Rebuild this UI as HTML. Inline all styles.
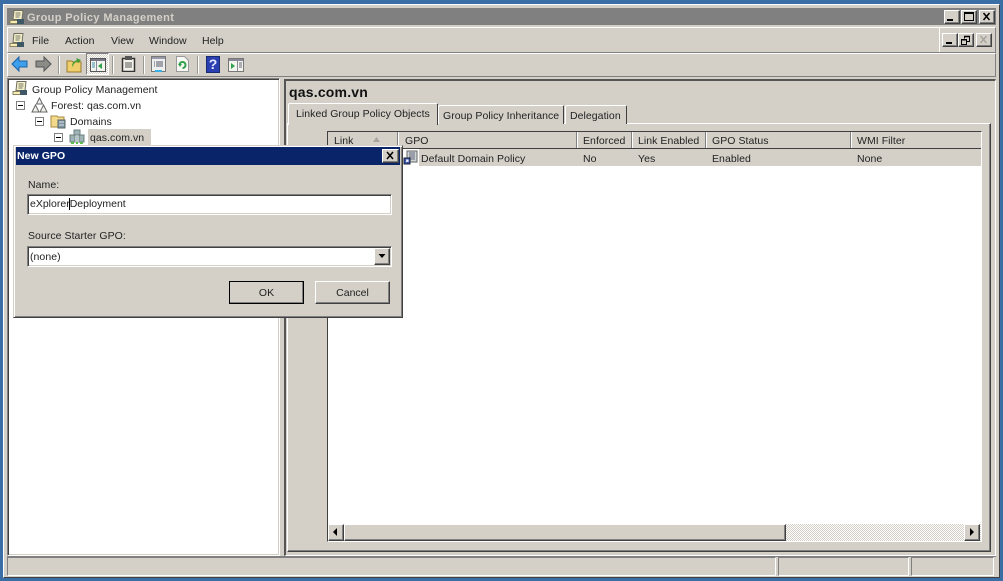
<!DOCTYPE html>
<html><head><meta charset="utf-8">
<style>
html,body{margin:0;padding:0}
body{width:1003px;height:581px;overflow:hidden;background:#3a6ea5;position:relative;font:10.5px/13px "Liberation Sans",sans-serif;color:#222}
div,span,svg{position:absolute;box-sizing:border-box}
.t{white-space:nowrap;letter-spacing:.05px}
.sunk{background:#fff;border:1px solid;border-color:#808080 #fff #fff #808080;box-shadow:inset 1px 1px 0 #404040,inset -1px -1px 0 #d4d0c8}
.rais{background:#d4d0c8;border:1px solid;border-color:#fff #404040 #404040 #fff;box-shadow:inset -1px -1px 0 #808080}
.hd{top:132px;height:17px;background:#d4d0c8;border-right:1px solid #808080;border-left:1px solid #fff}
.hdt{top:135px}
.rowt{top:153px}
.sep{top:56px;width:1px;height:18px;background:#9a9a94;box-shadow:1px 0 0 #fff}
.tab{background:#d4d0c8;border:1px solid #fff;border-bottom:0;border-right:1px solid #404040;border-radius:2px 2px 0 0}
.btn{text-align:center}
</style></head><body>

<!-- window -->
<div style="left:3px;top:4px;width:997px;height:574px;background:#d4d0c8;border:1px solid #fff;border-right-color:#404040;border-bottom-color:#404040"></div>
<div style="left:7px;top:8px;width:989px;height:17px;background:#808080"></div>
<svg style="left:9px;top:10px" width="17" height="15" viewBox="0 0 17 15"><path d="M5 .5h9l-1 9H4z" fill="#f6f0c8" stroke="#6e6e60"/><path d="M6.500 3h5M6.500 5h5M6.500 7h4" stroke="#77776a"/><path d="M1 10.500h8v3H1z" fill="#f6ecb4" stroke="#8a8560"/><path d="M8 9h7v5H8z" fill="#3f5866"/></svg>
<div class="t" style="left:27px;top:12px;font-weight:bold;font-size:11px;color:#d4d0c8;letter-spacing:.37px">Group Policy Management</div>
<div class="rais" style="left:944px;top:10px;width:16px;height:14px"></div>
<div style="left:947px;top:19px;width:6px;height:2px;background:#000"></div>
<div class="rais" style="left:961px;top:10px;width:16px;height:14px"></div>
<div style="left:964px;top:12px;width:10px;height:9px;border:1px solid #000;border-top-width:2px"></div>
<div class="rais" style="left:979px;top:10px;width:16px;height:14px"></div>
<svg style="left:979px;top:10px" width="16" height="14"><path d="M4.500 3l6 7M10.500 3l-6 7" stroke="#000" stroke-width="1.500"/></svg>

<!-- menu -->
<div style="left:7px;top:27px;width:989px;height:26px;border:1px solid;border-color:#fff #808080 #808080 #fff"></div>
<div style="left:939px;top:28px;width:1px;height:24px;background:#fff"></div>
<svg style="left:9px;top:33px" width="17" height="15" viewBox="0 0 17 15"><path d="M5 .5h9l-1 9H4z" fill="#f6f0c8" stroke="#6e6e60"/><path d="M6.500 3h5M6.500 5h5M6.500 7h4" stroke="#77776a"/><path d="M1 10.500h8v3H1z" fill="#f6ecb4" stroke="#8a8560"/><path d="M8 9h7v5H8z" fill="#3f5866"/></svg>
<div class="t" style="left:32px;top:35px">File</div>
<div class="t" style="left:65px;top:35px">Action</div>
<div class="t" style="left:111px;top:35px">View</div>
<div class="t" style="left:149px;top:35px">Window</div>
<div class="t" style="left:202px;top:35px">Help</div>
<div class="rais" style="left:942px;top:33px;width:16px;height:14px"></div>
<div style="left:946px;top:42px;width:6px;height:2px;background:#000"></div>
<div class="rais" style="left:958px;top:33px;width:16px;height:14px"></div>
<svg style="left:958px;top:33px" width="16" height="14"><path d="M6.500 3.500h5v5h-3M6.500 3.500v2" fill="none" stroke="#000"/><path d="M6 3.500h6" stroke="#000" stroke-width="1.500"/><rect x="3.500" y="6.500" width="5" height="5" fill="none" stroke="#000"/><path d="M3 7h6" stroke="#000"/></svg>
<div class="rais" style="left:976px;top:33px;width:16px;height:14px"></div>
<svg style="left:976px;top:33px" width="16" height="14"><path d="M4.500 3l6 7M10.500 3l-6 7" stroke="#a8a59e" stroke-width="1.500"/></svg>

<!-- toolbar -->
<div style="left:7px;top:53px;width:989px;height:24px;border:1px solid;border-color:#fff #808080 #808080 #fff"></div>
<svg style="left:11px;top:55px" width="18" height="18" viewBox="0 0 18 18"><path d="M1 9l7-7v4h8v6H8v4z" fill="#3ea0ea" stroke="#1c5fa8"/></svg>
<svg style="left:34px;top:55px" width="18" height="18" viewBox="0 0 18 18"><path d="M17 9l-7-7v4H2v6h8v4z" fill="#8c8c86" stroke="#555"/></svg>
<div class="sep" style="left:58px"></div>
<svg style="left:66px;top:56px" width="17" height="17" viewBox="0 0 17 17"><path d="M1 5h5l1 1h8v10H1z" fill="#f0ce6c" stroke="#9a7a30"/><path d="M6 11c0-4 2-6 5-7l-1-2 5 2-3 3-1-2c-2 1-3 3-5 6z" fill="#3f9e2f"/></svg>
<div style="left:86px;top:53px;width:23px;height:22px;background:repeating-conic-gradient(#fff 0 25%,#d4d0c8 0 50%) 0 0/2px 2px;border:1px solid;border-color:#808080 #fff #fff #808080"></div>
<svg style="left:90px;top:58px" width="16" height="14" viewBox="0 0 16 14"><path d="M.5.500h15v13H.5z" fill="#f4f4ee" stroke="#555"/><path d="M1 1h14v2H1z" fill="#778"/><path d="M6.500 3v10" stroke="#889"/><path d="M2 5h3M2 7h3M2 9h3" stroke="#3a8fb0"/><path d="M12 5v6L8 8z" fill="#2fa04a"/></svg>
<div class="sep" style="left:112px"></div>
<svg style="left:121px;top:55px" width="15" height="17" viewBox="0 0 15 17"><path d="M1.500 3.500h12v13h-12z" fill="#f4f2ea" stroke="#333" stroke-width="1.500"/><path d="M4 1h7v4H4z" fill="#555"/><path d="M4 8h7M4 10h7M4 12h7" stroke="#555"/></svg>
<div class="sep" style="left:143px"></div>
<svg style="left:151px;top:56px" width="15" height="16" viewBox="0 0 15 16"><path d="M.5.500h14v15H.5z" fill="#eef0f0" stroke="#777"/><path d="M1 1h13v2H1z" fill="#99a"/><path d="M3 6h1M5 6h7M3 8h1M5 8h7M3 10h1M5 10h7" stroke="#556"/><path d="M4 14h7v2H4z" fill="#35b0e8"/></svg>
<svg style="left:176px;top:56px" width="13" height="16" viewBox="0 0 13 16"><path d="M.5.500h8l4 4v11H.5z" fill="#f8f8f4" stroke="#999"/><path d="M3.500 9a3 3 0 1 1 3 3" fill="none" stroke="#2fa04a" stroke-width="2"/><path d="M2 8h4l-2 3z" fill="#2fa04a"/></svg>
<div class="sep" style="left:197px"></div>
<div style="left:206px;top:56px;width:14px;height:17px;background:#2a3fb0;border:1px solid #1a2a70"></div>
<div style="left:206px;top:56px;width:14px;height:17px;text-align:center;color:#e8e8ff;font:bold 14px/17px 'Liberation Sans',sans-serif">?</div>
<svg style="left:228px;top:58px" width="16" height="14" viewBox="0 0 16 14"><path d="M.5.500h15v13H.5z" fill="#f4f4ee" stroke="#777"/><path d="M1 1h14v2H1z" fill="#889"/><path d="M9.500 3v10" stroke="#889"/><path d="M11 5h3M11 7h3M11 9h3" stroke="#667"/><path d="M3 5v6l4-3z" fill="#2fa04a"/></svg>

<!-- tree -->
<div class="sunk" style="left:7px;top:78px;width:273px;height:478px"></div>
<svg style="left:12px;top:81px" width="17" height="15" viewBox="0 0 17 15"><path d="M5 .5h9l-1 9H4z" fill="#f6f0c8" stroke="#6e6e60"/><path d="M6.500 3h5M6.500 5h5M6.500 7h4" stroke="#77776a"/><path d="M1 10.500h8v3H1z" fill="#f6ecb4" stroke="#8a8560"/><path d="M8 9h7v5H8z" fill="#3f5866"/></svg>
<div class="t" style="left:32px;top:84px">Group Policy Management</div>
<div style="left:16px;top:101px;width:9px;height:9px;border:1px solid #808080;background:#fff"></div><div style="left:18px;top:105px;width:5px;height:1px;background:#000"></div>
<svg style="left:31px;top:97px" width="17" height="16" viewBox="0 0 17 16"><path d="M8.500 1l3 6h-6zM4.500 8l3.500 7H1zM12.500 8l3.500 7H9z" fill="#f0f0ec" stroke="#666"/></svg>
<div class="t" style="left:51px;top:100px">Forest: qas.com.vn</div>
<div style="left:35px;top:117px;width:9px;height:9px;border:1px solid #808080;background:#fff"></div><div style="left:37px;top:121px;width:5px;height:1px;background:#000"></div>
<svg style="left:50px;top:113px" width="17" height="16" viewBox="0 0 17 16"><path d="M1 3h6l1 1h6v10H1z" fill="#f3d98c" stroke="#a98a40"/><path d="M8 7h7v8H8z" fill="#7e97a0" stroke="#566"/><path d="M9 9h5M9 12h5" stroke="#dde"/></svg>
<div class="t" style="left:70px;top:116px">Domains</div>
<div style="left:54px;top:133px;width:9px;height:9px;border:1px solid #808080;background:#fff"></div><div style="left:56px;top:137px;width:5px;height:1px;background:#000"></div>
<svg style="left:69px;top:129px" width="16" height="16" viewBox="0 0 16 16"><path d="M5 1h6v5H5zM1 6h5v7H1zM10 6h5v7h-5z" fill="#9fb2b5" stroke="#6c8080"/><path d="M6 7h4v7H6z" fill="#b8c6c8"/><path d="M2 13h3v2H2zM11 13h3v2h-3zM7 13h2v2H7z" fill="#5fc04a"/></svg>
<div style="left:88px;top:129px;width:63px;height:16px;background:#d4d0c8"></div>
<div class="t" style="left:90px;top:132px">qas.com.vn</div>

<!-- right pane -->
<div style="left:284px;top:79px;width:712px;height:477px;border-top:2px solid #555;border-left:2px solid #555;border-right:1px solid #fff;border-bottom:1px solid #fff"></div>
<div class="t" style="left:289px;top:84px;font-weight:bold;font-size:14px;line-height:16px;color:#111;letter-spacing:.2px">qas.com.vn</div>
<div style="left:287px;top:123px;width:704px;height:429px;background:#d4d0c8;border:1px solid;border-color:#fff #404040 #404040 #fff;box-shadow:inset -1px -1px 0 #808080"></div>
<div class="tab" style="left:438px;top:105px;width:126px;height:19px"></div>
<div class="t" style="left:443px;top:110px">Group Policy Inheritance</div>
<div class="tab" style="left:565px;top:105px;width:62px;height:19px"></div>
<div class="t" style="left:570px;top:110px">Delegation</div>
<div class="tab" style="left:288px;top:103px;width:150px;height:22px;z-index:1"></div>
<div class="t" style="left:296px;top:108px;z-index:2">Linked Group Policy Objects</div>

<!-- list -->
<div style="left:327px;top:131px;width:655px;height:411px;background:#fff;border:1px solid;border-color:#404040 #fff #fff #404040"></div>
<div style="left:328px;top:132px;width:653px;height:17px;background:#d4d0c8;border-bottom:1px solid #404040"></div>
<div class="hd" style="left:328px;width:70px;border-left:0"></div>
<div class="hd" style="left:398px;width:179px"></div>
<div class="hd" style="left:577px;width:55px"></div>
<div class="hd" style="left:632px;width:74px"></div>
<div class="hd" style="left:706px;width:145px"></div>
<div class="hd" style="left:851px;width:130px;border-right:0"></div>
<div style="left:328px;top:148px;width:653px;height:1px;background:#404040"></div>
<div class="t hdt" style="left:334px">Link</div>
<svg style="left:372px;top:137px" width="9" height="6"><path d="M4.500 0L8 5H1z" fill="#a8a59e"/></svg>
<div class="t hdt" style="left:405px">GPO</div>
<div class="t hdt" style="left:583px">Enforced</div>
<div class="t hdt" style="left:638px">Link Enabled</div>
<div class="t hdt" style="left:712px">GPO Status</div>
<div class="t hdt" style="left:857px">WMI Filter</div>
<div style="left:328px;top:149px;width:653px;height:17px;background:#d4d0c8"></div>
<div style="left:403px;top:149px;width:16px;height:17px;background:#fff"></div>
<svg style="left:403px;top:150px" width="15" height="15" viewBox="0 0 15 15"><path d="M4 1h10v11H4z" fill="#cfd6d8" stroke="#666"/><path d="M6 3h6M6 5h6M6 7h6M6 9h6" stroke="#667"/><path d="M1 8h6v6H1z" fill="#3450b0" stroke="#223"/><path d="M3 12l2-2M3 10h2v2" stroke="#fff" fill="none"/></svg>
<div class="t rowt" style="left:421px">Default Domain Policy</div>
<div class="t rowt" style="left:583px">No</div>
<div class="t rowt" style="left:638px">Yes</div>
<div class="t rowt" style="left:712px">Enabled</div>
<div class="t rowt" style="left:857px">None</div>

<!-- scrollbar -->
<div style="left:328px;top:524px;width:653px;height:17px;background:repeating-conic-gradient(#fff 0 25%,#d4d0c8 0 50%) 0 0/2px 2px"></div>
<div class="rais" style="left:328px;top:524px;width:16px;height:17px"></div>
<svg style="left:328px;top:524px" width="16" height="17"><path d="M9 4v8L5 8z" fill="#000"/></svg>
<div class="rais" style="left:344px;top:524px;width:442px;height:17px"></div>
<div class="rais" style="left:964px;top:524px;width:16px;height:17px"></div>
<svg style="left:964px;top:524px" width="16" height="17"><path d="M6 4v8l4-4z" fill="#000"/></svg>

<!-- status -->
<div style="left:7px;top:556px;width:989px;height:1px;background:#808080"></div>
<div style="left:7px;top:557px;width:769px;height:19px;border:1px solid;border-color:#808080 #fff #fff #808080"></div>
<div style="left:778px;top:557px;width:131px;height:19px;border:1px solid;border-color:#808080 #fff #fff #808080"></div>
<div style="left:911px;top:557px;width:83px;height:19px;border:1px solid;border-color:#808080 #fff #fff #808080"></div>

<!-- dialog -->
<div style="left:13px;top:145px;width:390px;height:173px;background:#d4d0c8;border:1px solid;border-color:#d4d0c8 #404040 #404040 #d4d0c8;box-shadow:inset 1px 1px 0 #fff,inset -1px -1px 0 #808080;z-index:10"></div>
<div style="left:16px;top:147px;width:384px;height:18px;background:#0a246a;z-index:11"></div>
<div class="t" style="left:17px;top:150px;font-weight:bold;color:#fff;z-index:12">New GPO</div>
<div class="rais" style="left:382px;top:149px;width:17px;height:14px;z-index:12"></div>
<svg style="left:382px;top:149px;z-index:13" width="17" height="14"><path d="M5 3l6 7M11 3l-6 7" stroke="#000" stroke-width="1.500"/></svg>
<div class="t" style="left:28px;top:179px;z-index:12">Name:</div>
<div class="sunk" style="left:27px;top:194px;width:365px;height:21px;z-index:12"></div>
<div class="t" style="left:30px;top:198px;z-index:13;letter-spacing:0">eXplorerDeployment</div>
<div style="left:69px;top:198px;width:1px;height:12px;background:#000;z-index:14"></div>
<div class="t" style="left:28px;top:230px;z-index:12">Source Starter GPO:</div>
<div class="sunk" style="left:27px;top:246px;width:365px;height:21px;z-index:12"></div>
<div class="t" style="left:30px;top:251px;z-index:13">(none)</div>
<div class="rais" style="left:374px;top:248px;width:16px;height:17px;z-index:13"></div>
<svg style="left:374px;top:248px;z-index:14" width="16" height="17"><path d="M4.500 6h7L8 10z" fill="#000"/></svg>
<div class="rais btn" style="left:229px;top:281px;width:75px;height:23px;z-index:12;outline:1px solid #000;outline-offset:-1px;line-height:22px">OK</div>
<div class="rais btn" style="left:315px;top:281px;width:75px;height:23px;z-index:12;line-height:22px">Cancel</div>

</body></html>
